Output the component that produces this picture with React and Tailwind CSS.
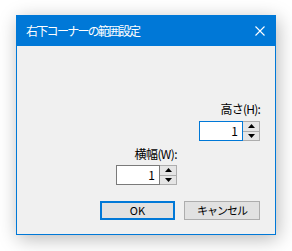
const font = { fontFamily: '"Noto Sans CJK JP", "Noto Sans", sans-serif' };

const SpinBox = ({ value, focused }) => (
  <div className="flex h-[20px] w-[61px]">
    <div
      className={`flex-1 flex items-center justify-end pr-[4px] bg-white border text-[12px] leading-none text-black ${
        focused ? "border-[#0078d7]" : "border-[#7a7a7a]"
      }`}
    >
      {value}
    </div>
    <div className="w-[17px] flex flex-col border border-[#adadad] border-l-0">
      <div className="flex-1 flex items-center justify-center bg-[#e5e5e5] border-b border-[#adadad]">
        <svg width="7" height="4" viewBox="0 0 7 4">
          <path d="M3.5 0 L7 4 L0 4 Z" fill="#000" />
        </svg>
      </div>
      <div className="flex-1 flex items-center justify-center bg-[#e5e5e5]">
        <svg width="7" height="4" viewBox="0 0 7 4">
          <path d="M0 0 L7 0 L3.5 4 Z" fill="#000" />
        </svg>
      </div>
    </div>
  </div>
);

export default function App() {
  return (
    <div className="w-[292px] h-[251px] bg-white pt-[15px] pl-[16px]" style={font}>
      <div className="w-[260px] h-[220px] border border-[#0078d7] bg-[#f0f0f0] flex flex-col shadow-[2px_4px_18px_rgba(0,0,0,0.28)]">
        <div className="h-[30px] bg-[#0078d7] text-white flex items-center justify-between pl-[9px] pr-[10px]">
          <span className="text-[12px] tracking-[-1.7px] leading-none">右下コーナーの範囲設定</span>
          <svg width="10" height="10" viewBox="0 0 10 10">
            <path d="M0.5 0.5 L9.5 9.5 M9.5 0.5 L0.5 9.5" stroke="#fff" strokeWidth="1.1" />
          </svg>
        </div>

        <div className="flex flex-col items-end pr-[15px] pt-[55px]">
          <span className="text-[12px] leading-[16px] tracking-[-0.8px] text-black">高さ(H):</span>
          <div className="mt-[4px]">
            <SpinBox value="1" focused />
          </div>
        </div>

        <div className="flex flex-col items-end pr-[98px] mt-[5px]">
          <span className="text-[12px] leading-[16px] tracking-[-0.6px] text-black">横幅(W):</span>
          <div className="mt-[3px]">
            <SpinBox value="1" />
          </div>
        </div>

        <div className="flex justify-end gap-[9px] pr-[15px] mt-[16px]">
          <button className="w-[75px] h-[19px] border-2 border-[#0078d7] bg-[#e1e1e1] text-[11px] leading-none text-black">
            OK
          </button>
          <button className="w-[76px] h-[19px] border border-[#adadad] bg-[#e1e1e1] text-[11px] tracking-[-1px] leading-none text-black">
            キャンセル
          </button>
        </div>
      </div>
    </div>
  );
}
